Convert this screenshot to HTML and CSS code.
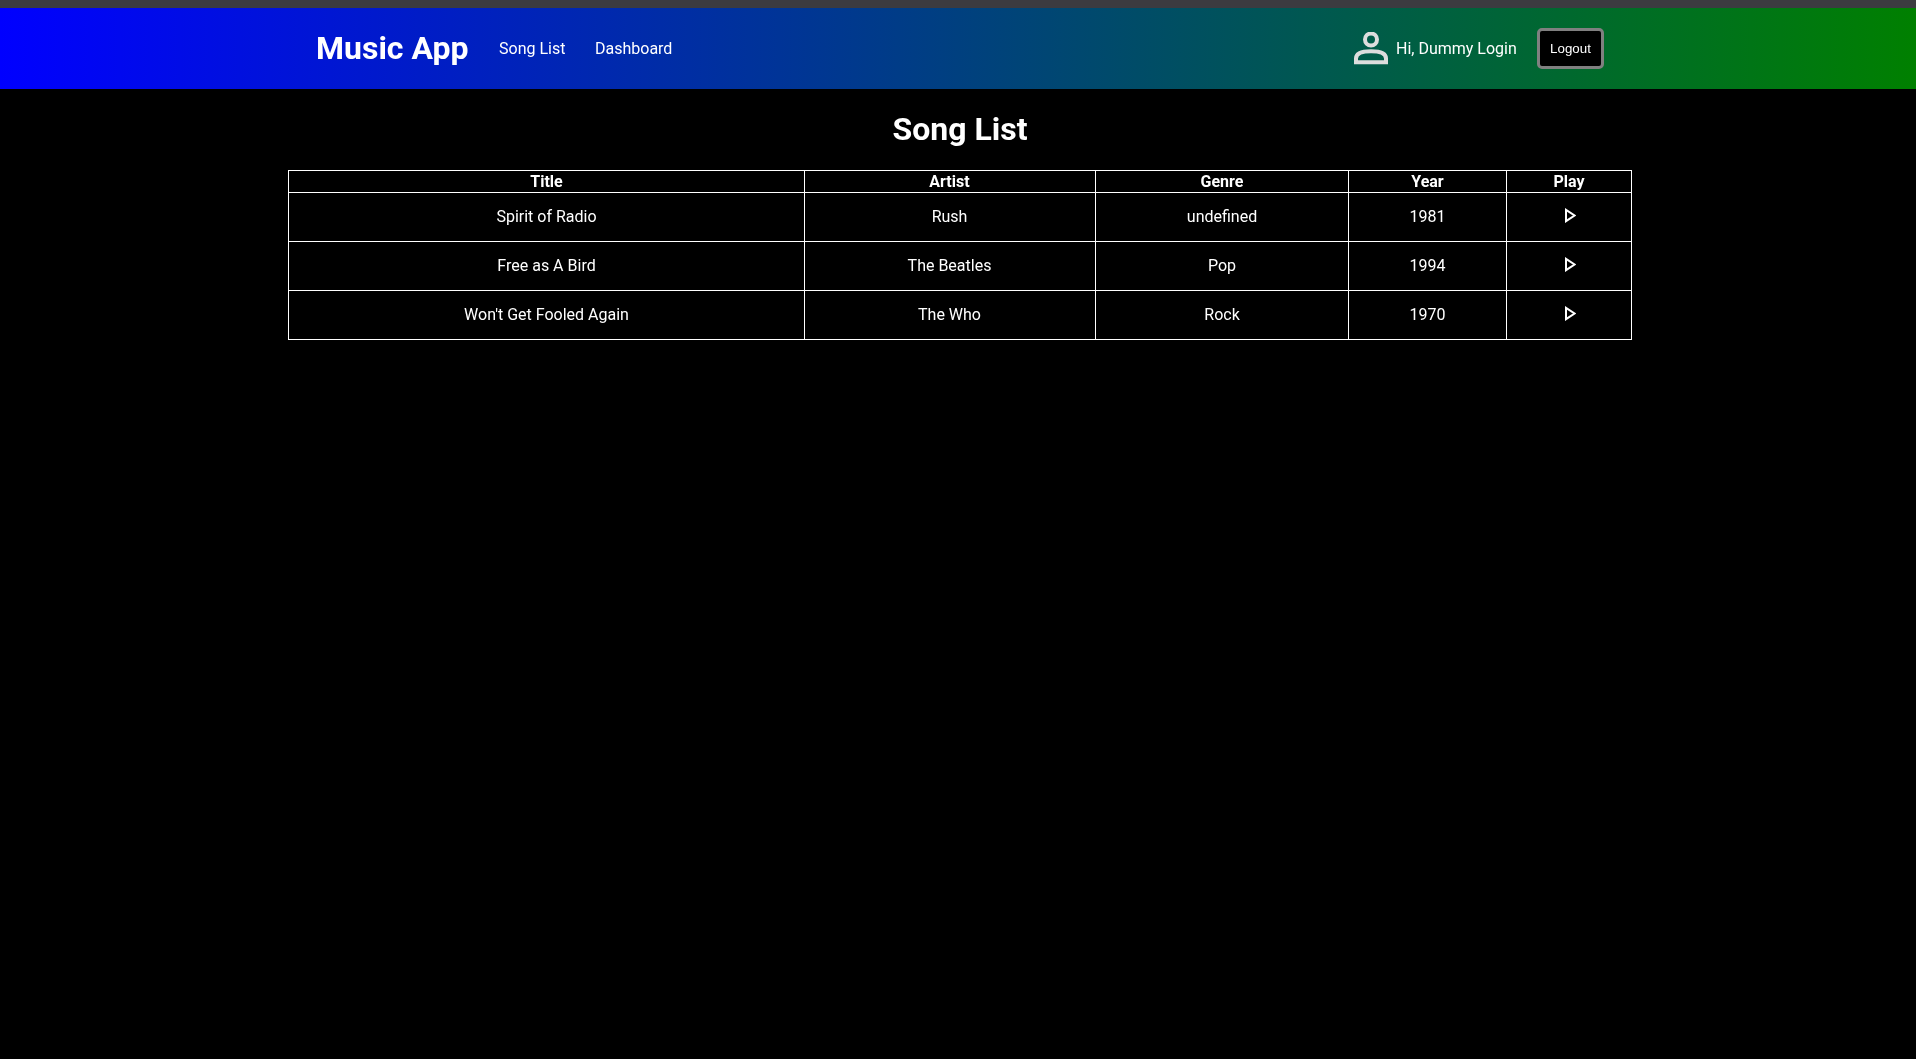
FILE: index.html
```html
<!DOCTYPE html>
<html lang="en">
<head>
<meta charset="utf-8">
<title>Music App</title>
<link rel="stylesheet" href="styles.css">
</head>
<body>
<div class="strip"></div>
<nav class="navbar">
  <a class="brand" href="#">Music App</a>
  <a class="nav-link" href="#">Song List</a>
  <a class="nav-link" href="#">Dashboard</a>
  <div class="user">
    <svg class="user-icon" viewBox="0 0 34 33" width="34" height="33" aria-hidden="true">
      <circle cx="17" cy="7.5" r="6"/>
      <path d="M2 30.3V26.5C2 21 10 19.3 17 19.3S32 21 32 26.5V30.3Z"/>
    </svg>
    <span class="greeting">Hi, Dummy Login</span>
    <button class="logout" type="button">Logout</button>
  </div>
</nav>
<main class="content">
  <h1 class="title">Song List</h1>
  <table class="songs">
    <thead>
      <tr>
        <th class="col-title">Title</th>
        <th class="col-artist">Artist</th>
        <th class="col-genre">Genre</th>
        <th class="col-year">Year</th>
        <th class="col-play">Play</th>
      </tr>
    </thead>
    <tbody>
      <tr>
        <td>Spirit of Radio</td><td class="artist">Rush</td><td>undefined</td><td>1981</td>
        <td><button class="play" type="button" aria-label="Play"><svg viewBox="0 0 11 15" width="11" height="15"><path d="M1 1.8L9.6 7.5L1 13.2Z"/></svg></button></td>
      </tr>
      <tr>
        <td>Free as A Bird</td><td class="artist">The Beatles</td><td>Pop</td><td>1994</td>
        <td><button class="play" type="button" aria-label="Play"><svg viewBox="0 0 11 15" width="11" height="15"><path d="M1 1.8L9.6 7.5L1 13.2Z"/></svg></button></td>
      </tr>
      <tr>
        <td>Won't Get Fooled Again</td><td class="artist">The Who</td><td>Rock</td><td>1970</td>
        <td><button class="play" type="button" aria-label="Play"><svg viewBox="0 0 11 15" width="11" height="15"><path d="M1 1.8L9.6 7.5L1 13.2Z"/></svg></button></td>
      </tr>
    </tbody>
  </table>
</main>
</body>
</html>
```

FILE: styles.css
```css
* { box-sizing: border-box; }
html, body { margin: 0; height: 100%; overflow: hidden; }
body {
  background: #000;
  color: #fff;
  font-family: Roboto, "Liberation Sans", sans-serif;
  font-size: 16px;
  line-height: 1.5;
}
.strip { height: 8px; background: #3c3b40; }
.navbar {
  display: flex;
  align-items: center;
  height: 81px;
  padding: 0 312px 0 316px;
  background: linear-gradient(to right, #00f, #008000);
}
.brand {
  color: #fff;
  font-size: 32px;
  font-weight: 700;
  text-decoration: none;
  margin: 0 30.5px 2px 0;
  will-change: transform;
}
.nav-link {
  color: #fff;
  text-decoration: none;
  margin-right: 30px;
  will-change: transform;
}
.user {
  display: flex;
  align-items: center;
  margin-left: auto;
}
.user-icon { margin-right: 8px; fill: none; stroke: #ddd; stroke-width: 4; }
.greeting { margin-right: 20px; will-change: transform; }
.logout {
  width: 67px;
  height: 41px;
  padding: 0;
  background: #000;
  color: #fff;
  border: 3px solid #808080;
  border-radius: 5px;
  font-family: "Liberation Sans", Arial, sans-serif;
  font-size: 13.33px;
  will-change: transform;
}
.content { width: 1343px; margin-left: 288px; will-change: transform; }
.title {
  margin: 0;
  padding: 16px 0 0 1px;
  height: 81px;
  font-size: 32px;
  font-weight: 700;
  line-height: 48px;
  text-align: center;
}
.songs {
  width: 1343px;
  table-layout: fixed;
  border-collapse: collapse;
  text-align: center;
}
.songs th, .songs td { border: 1px solid #fff; padding: 0; }
.songs th { height: 22px; line-height: 20px; font-weight: 700; }
.songs td { height: 49px; }
.songs .col-artist, .songs .artist { padding-right: 1px; }
.col-title { width: 516px; }
.col-artist { width: 291px; }
.col-genre { width: 253px; }
.col-year { width: 158px; }
.col-play { width: 125px; }
.play {
  display: block;
  margin: 0 auto;
  padding: 0;
  width: 11px;
  height: 15px;
  background: none;
  border: 0;
  transform: translate(1px, -2px);
}
.play svg { display: block; fill: none; stroke: #fff; stroke-width: 2; }
```
